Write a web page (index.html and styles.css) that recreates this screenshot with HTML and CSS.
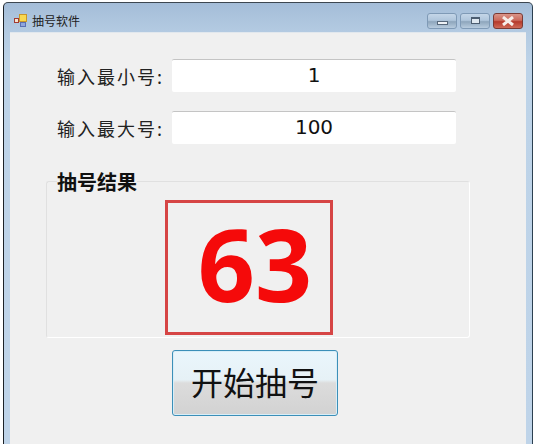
FILE: index.html
```html
<!DOCTYPE html>
<html lang="zh-CN">
<head>
    <meta charset="UTF-8">
    <meta name="viewport" content="width=device-width, initial-scale=1.0">
    <title>抽号软件</title>
    <link rel="stylesheet" href="styles.css">
</head>
<body>

<div class="window">
    <div class="titlebar">
        <svg class="app-icon" width="15" height="14" viewBox="0 0 15 14">
            <rect x="0.5" y="5.5" width="4" height="4" fill="#f4e3d0" stroke="#a33a30"/>
            <rect x="5.5" y="1.5" width="7" height="7" fill="#f8d850" stroke="#c9962a"/>
            <rect x="6.5" y="9.5" width="5" height="4" fill="#8fa6de" stroke="#5a70b5"/>
        </svg>
        <span class="title">抽号软件</span>
        <div class="window-buttons">
            <div class="win-btn"><span class="min-glyph"></span></div>
            <div class="win-btn"><span class="max-glyph"></span></div>
            <div class="win-btn close-btn">
                <svg width="16" height="10" viewBox="0 0 16 10">
                    <path d="M3 1 L13 9 M13 1 L3 9" stroke="#f6eeea" stroke-width="3"/>
                </svg>
            </div>
        </div>
    </div>

    <div class="client">
        <div class="field">
            <label for="min-input">输入最小号:</label>
            <input type="text" id="min-input" value="1">
        </div>
        <div class="field">
            <label for="max-input">输入最大号:</label>
            <input type="text" id="max-input" value="100">
        </div>

        <fieldset class="result-group">
            <legend>抽号结果</legend>
            <div class="result-box">63</div>
        </fieldset>

        <button class="start-button">开始抽号</button>
    </div>
</div>

</body>
</html>
```

FILE: styles.css
```css
body {
    margin: 0;
    height: 444px;
    overflow: hidden;
    background-color: #fff;
    font-family: "Noto Sans CJK SC", "Liberation Sans", sans-serif;
    color: #222;
}

.window {
    height: 442px;
    margin: 2px 3px 0 3px;
    border-top: 1px solid #3c4650;
    border-left: 1px solid #1c2228;
    border-right: 1px solid #2c4050;
    border-radius: 5px 5px 0 0;
    padding: 0 6px;
    box-sizing: border-box;
    background: linear-gradient(to bottom, #a4bdd8 0, #b4cbe2 30px, #bdd3e8 60px, #bfd4e9 100%);
}

.titlebar {
    display: flex;
    align-items: center;
    height: 29px;
    padding: 5px 0 0 4px;
    box-sizing: border-box;
}

.app-icon {
    margin-right: 3px;
}

.title {
    font-size: 12px;
}

.window-buttons {
    display: flex;
    gap: 3px;
    margin-left: auto;
    margin-right: 3px;
    margin-top: 1px;
}

.win-btn {
    display: flex;
    align-items: center;
    justify-content: center;
    width: 30px;
    height: 16px;
    border: 1px solid #7f9ab6;
    border-radius: 3px;
    box-sizing: border-box;
    background: linear-gradient(to bottom, #c4d6e8 0, #b0c6dc 45%, #8ea6bc 55%, #b8ccdf 100%);
}

.close-btn {
    border-color: #7a3a34;
    background: linear-gradient(to bottom, #d99488 0, #cb6a5c 45%, #b53a2c 55%, #cf6a58 100%);
}

.min-glyph {
    width: 9px;
    height: 2px;
    margin-top: 5px;
    background-color: #eef2f6;
    border: 1px solid #56677a;
}

.max-glyph {
    width: 7px;
    height: 4px;
    background-color: #dfe8f0;
    border: 2px solid #4c5d70;
    border-width: 2px 1px 1px 1px;
}

.client {
    height: 412px;
    padding: 26px 0 0 36px;
    box-sizing: border-box;
    background-color: #f0f0f0;
    border-top: 1px solid #e2e8ee;
}

.field {
    display: flex;
    align-items: center;
    height: 33px;
    margin-bottom: 19px;
    padding-left: 11px;
}

.field label {
    width: 115px;
    font-size: 18px;
    letter-spacing: 2px;
    white-space: nowrap;
}

.field input {
    width: 284px;
    height: 33px;
    padding: 0 0 2px 0;
    border: none;
    border-top: 1px solid #c4c4c4;
    border-radius: 2px;
    box-sizing: border-box;
    background-color: #fff;
    font-family: "DejaVu Sans", sans-serif;
    font-size: 20px;
    text-align: center;
    color: #111;
}

.result-group {
    position: relative;
    width: 424px;
    height: 157px;
    margin: 37px 0 0 0;
    padding: 0;
    border: 1px solid #e0e0e0;
    border-right-color: #fff;
    border-bottom-color: #fff;
    border-radius: 3px;
    box-sizing: border-box;
}

.result-group legend {
    position: absolute;
    top: -12px;
    left: 10px;
    padding: 0;
    font-size: 20px;
    line-height: 24px;
    font-weight: bold;
    color: #111;
    background-color: #f0f0f0;
}

.result-box {
    display: flex;
    align-items: center;
    justify-content: center;
    width: 168px;
    height: 135px;
    margin: 18px 0 0 118px;
    padding: 0 0 10px 12px;
    border: 3px solid #d64545;
    box-sizing: border-box;
    font-family: "Noto Sans", sans-serif;
    font-size: 100px;
    font-weight: bold;
    color: #f50a0a;
}

.start-button {
    display: block;
    width: 166px;
    height: 66px;
    margin: 12px 0 0 126px;
    padding: 0 0 5px 0;
    border: 1px solid #3c8fb8;
    border-radius: 3px;
    background: linear-gradient(to bottom, #eaf6fc 0, #e6f1f6 45%, #dcdcdc 50%, #d2d2d2 100%);
    box-shadow: inset 0 0 0 1px #d8eef8;
    font-family: "Noto Sans CJK SC", sans-serif;
    font-size: 32px;
    color: #111;
    cursor: pointer;
}
```
